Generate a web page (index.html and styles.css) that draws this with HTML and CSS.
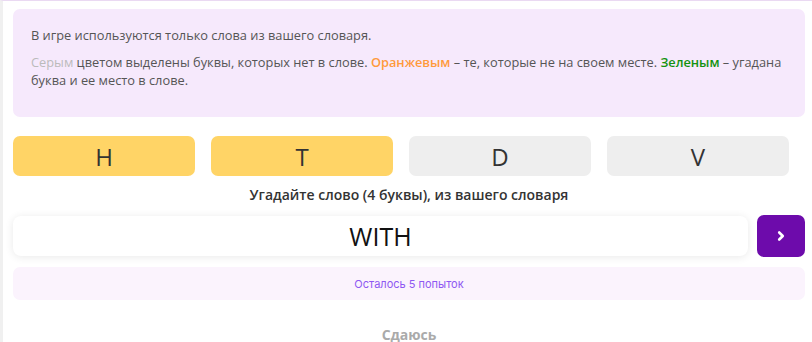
FILE: index.html
```html
<!DOCTYPE html>
<html lang="ru">
<head>
  <meta charset="UTF-8" />
  <meta name="viewport" content="width=device-width, initial-scale=1.0" />
  <title>Угадай слово</title>
  <link rel="stylesheet" href="styles.css">
</head>
<body>
  <div class="page">
    <div class="rules">
      <p>В игре используются только слова из вашего словаря.</p>
      <p><span class="gray">Серым</span> цветом выделены буквы, которых нет в слове. <span class="orange">Оранжевым</span> – те, которые не на своем месте. <span class="green">Зеленым</span> – угадана буква и ее место в слове.</p>
    </div>

    <div class="tiles">
      <div class="tile misplaced">H</div>
      <div class="tile misplaced">T</div>
      <div class="tile">D</div>
      <div class="tile">V</div>
    </div>

    <div class="prompt">Угадайте слово (4 буквы), из вашего словаря</div>

    <div class="guess-row">
      <input type="text" class="guess" value="WITH">
      <button class="send" aria-label="Отправить">
        <svg width="10" height="12" viewBox="0 0 10 12"><path d="M3.2 2.5 L6.8 6 L3.2 9.5" fill="none" stroke="#fff" stroke-width="2.6" stroke-linecap="round" stroke-linejoin="round"/></svg>
      </button>
    </div>

    <div class="attempts">Осталось 5 попыток</div>

    <button class="give-up">Сдаюсь</button>
  </div>
</body>
</html>
```

FILE: styles.css
```css
:root {
  --purple: #6d0bab;
  --text-color: #555;
  --yellow: #ffd466;
  --tile-gray: #eeeeee;
}
body {
  margin: 0;
  font-family: "Open Sans", sans-serif;
  background: #fff;
  color: var(--text-color);
}
.page {
  min-height: 342px;
  box-sizing: border-box;
  border-left: 3px solid #f0f0f0;
  border-top: 1px solid #ead9f2;
  padding: 8px 7px 0 10px;
  display: flex;
  flex-direction: column;
}
.rules {
  background: #f6e9fc;
  border-radius: 7px;
  padding: 17px 12px 28px 18px;
  font-size: 12.8px;
  line-height: 18px;
}
.rules p {
  margin: 0;
}
.rules p + p {
  margin-top: 9px;
}
.gray { color: #bbb; }
.orange { color: #ff9a3c; font-weight: 600; }
.green { color: #13920f; font-weight: 600; }

.tiles {
  display: flex;
  margin-top: 19px;
}
.tile {
  width: 182px;
  height: 40px;
  margin-right: 16px;
  border-radius: 7px;
  background: var(--tile-gray);
  color: #333;
  font-size: 24px;
  display: flex;
  align-items: center;
  justify-content: center;
}
.tile.misplaced { background: var(--yellow); }

.prompt {
  text-align: center;
  font-size: 14px;
  font-weight: 600;
  color: #333;
  margin-top: 9px;
  line-height: 19px;
}
.guess-row {
  display: flex;
  gap: 9px;
  margin-top: 11px;
  align-items: center;
}
.guess {
  flex: 1;
  height: 40px;
  box-sizing: border-box;
  border: none;
  border-radius: 8px;
  background: #fff;
  box-shadow: 0 1px 8px rgba(0, 0, 0, 0.09);
  font-family: "Open Sans", sans-serif;
  font-size: 25px;
  font-weight: 500;
  color: #111;
  text-align: center;
  outline: none;
}
.send {
  width: 48px;
  height: 42px;
  border: none;
  border-radius: 7px;
  background: var(--purple);
  display: flex;
  align-items: center;
  justify-content: center;
  cursor: pointer;
}
.attempts {
  margin-top: 10px;
  height: 33px;
  border-radius: 7px;
  background: #fbf3fd;
  color: #8e58f2;
  font-family: Inter, sans-serif;
  font-size: 11px;
  display: flex;
  align-items: center;
  justify-content: center;
}
.give-up {
  align-self: center;
  margin-top: 27px;
  background: none;
  border: none;
  font-family: "Open Sans", sans-serif;
  font-size: 14px;
  line-height: 16px;
  font-weight: 700;
  color: #aaa;
  padding: 0;
  cursor: pointer;
}
```
